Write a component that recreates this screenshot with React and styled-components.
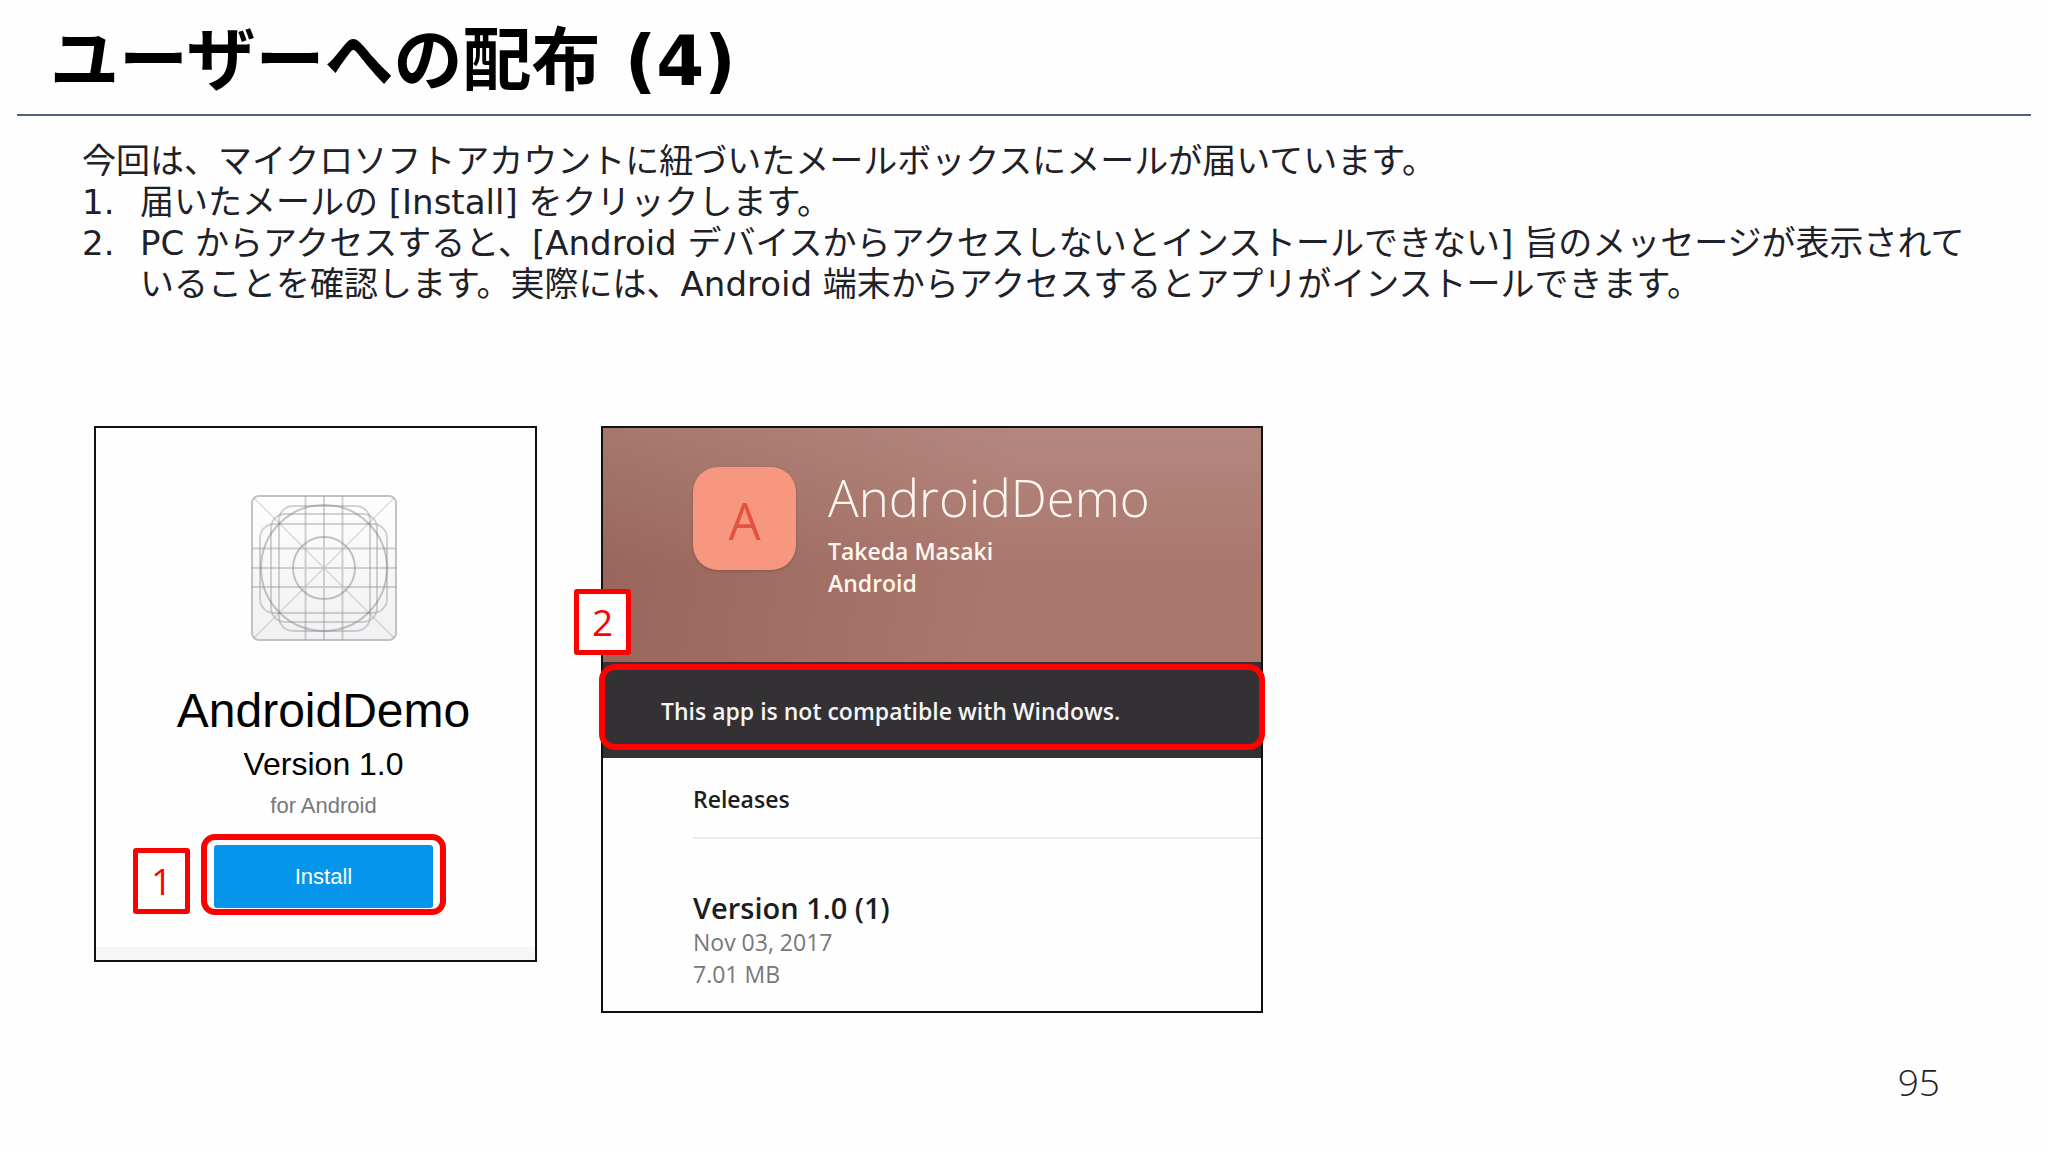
import React from "react";
import styled, { createGlobalStyle } from "styled-components";

export default function App() {
    return (
        <>
            <GlobalStyle />
            <Slide lang="ja">
                <Header>
                    <Title>ユーザーへの配布 (4)</Title>
                </Header>
                <Intro>
                    <p>今回は、マイクロソフトアカウントに紐づいたメールボックスにメールが届いています。</p>
                    <Steps>
                        <li>届いたメールの [Install] をクリックします。</li>
                        <li>
                            PC からアクセスすると、[Android デバイスからアクセスしないとインストールできない] 旨のメッセージが表示されていることを確認します。実際には、Android 端末からアクセスするとアプリがインストールできます。
                        </li>
                    </Steps>
                </Intro>
                <Figures>
                    <InstallCard />
                    <ReleaseCard />
                </Figures>
                <PageNumber>95</PageNumber>
            </Slide>
        </>
    );
}

function InstallCard() {
    return (
        <MailCard>
            <GridIcon />
            <MailTitle>AndroidDemo</MailTitle>
            <MailVersion>Version 1.0</MailVersion>
            <MailPlatform>for Android</MailPlatform>
            <ButtonFrame>
                <InstallButton type="button">Install</InstallButton>
                <Marker $top={8} $left={-74}>1</Marker>
            </ButtonFrame>
        </MailCard>
    );
}

function ReleaseCard() {
    return (
        <AppCard>
            <Banner>
                <AppIcon>A</AppIcon>
                <div>
                    <AppName>AndroidDemo</AppName>
                    <AppMeta>Takeda Masaki</AppMeta>
                    <AppMeta>Android</AppMeta>
                </div>
            </Banner>
            <Notice>
                This app is not compatible with Windows.
                <NoticeFrame />
                <Marker $top={-73} $left={-29}>2</Marker>
            </Notice>
            <Releases>
                <ReleasesTitle>Releases</ReleasesTitle>
                <ReleaseVersion>Version 1.0 (1)</ReleaseVersion>
                <ReleaseMeta>Nov 03, 2017</ReleaseMeta>
                <ReleaseMeta>7.01 MB</ReleaseMeta>
            </Releases>
        </AppCard>
    );
}

function GridIcon() {
    return (
        <IconSvg viewBox="0 0 146 146" aria-hidden="true">
            <defs>
                <linearGradient id="iconFill" x1="0" y1="0" x2="0" y2="1">
                    <stop offset="0" stopColor="#fefefe" />
                    <stop offset="1" stopColor="#f1f1f3" />
                </linearGradient>
            </defs>
            <rect x="1" y="1" width="144" height="144" rx="7" fill="url(#iconFill)" stroke="#c2c2c3" strokeWidth="2" />
            <g fill="none" stroke="#8c8c8e" strokeOpacity="0.28" strokeWidth="1.5">
                <path d="M3 3L143 143M143 3L3 143" />
            </g>
            <g fill="none" stroke="#8c8c8e" strokeOpacity="0.38" strokeWidth="2">
                <path d="M54.5 1V145M73 1V145M91.5 1V145M1 53.5H145M1 73H145M1 92H145" />
                <rect x="9" y="29" width="127" height="89" rx="14" />
                <rect x="28" y="11" width="91" height="125" rx="14" />
                <rect x="20" y="19" width="106" height="108" rx="14" />
            </g>
            <g fill="none" stroke="#7e7e80" strokeOpacity="0.45" strokeWidth="2">
                <circle cx="73" cy="73" r="63" />
                <circle cx="73" cy="73" r="31" />
            </g>
        </IconSvg>
    );
}

const GlobalStyle = createGlobalStyle`
    * {
        box-sizing: border-box;
    }

    body {
        margin: 0;
        background-color: #FEFEFE;
    }

    h1, h2, h3, p, ol {
        margin: 0;
        padding: 0;
        font-weight: 400;
    }
`;

const Slide = styled.main`
    min-height: 100vh;
    display: flex;
    flex-direction: column;
    color: #1F2128;
    font-family: "DejaVu Sans", "Noto Sans CJK JP", sans-serif;
`;

const Header = styled.header`
    margin: 0 17px;
    padding: 17px 33px 8px;
    border-bottom: 2px solid #4A6583;
`;

const Title = styled.h1`
    font-size: 69px;
    font-weight: 700;
    line-height: 89px;
    color: black;
`;

const Intro = styled.section`
    padding: 25px 50px 0 82px;
    font-size: 34px;
    line-height: 41px;
`;

const Steps = styled.ol`
    list-style: none;
    counter-reset: step;

    li {
        counter-increment: step;
        display: flex;
    }

    li::before {
        content: counter(step) ".";
        flex: 0 0 58px;
    }
`;

const Figures = styled.div`
    display: flex;
    align-items: flex-start;
    gap: 64px;
    padding: 121px 94px 0;
`;

const MailCard = styled.article`
    width: 443px;
    display: flex;
    flex-direction: column;
    align-items: center;
    padding: 67px 0 45px 16px;
    border: 2px solid #111111;
    background: linear-gradient(#F6F6F9, #F6F6F9) bottom / 100% 13px no-repeat;
    font-family: "Liberation Sans", Arial, sans-serif;
    color: black;
`;

const IconSvg = styled.svg`
    width: 146px;
    height: 146px;
`;

const MailTitle = styled.h2`
    margin-top: 40px;
    font-size: 48px;
    line-height: 60px;
`;

const MailVersion = styled.p`
    font-size: 32px;
    line-height: 46px;
`;

const MailPlatform = styled.p`
    font-size: 22px;
    line-height: 38px;
    color: #77787A;
`;

const ButtonFrame = styled.div`
    position: relative;
    margin-top: 9px;
    padding: 5px 7px 1px;
    border: 6px solid #FF0000;
    border-radius: 14px;
`;

const InstallButton = styled.button`
    display: block;
    width: 219px;
    height: 63px;
    padding: 0;
    border: none;
    border-radius: 3px;
    background-color: #0596EC;
    color: white;
    font-family: inherit;
    font-size: 22px;
`;

const Marker = styled.span`
    position: absolute;
    top: ${({ $top }) => $top}px;
    left: ${({ $left }) => $left}px;
    width: 57px;
    height: 66px;
    display: flex;
    align-items: center;
    justify-content: center;
    border: 5px solid #FF0000;
    border-radius: 3px;
    background-color: white;
    color: #FF0000;
    font-family: "Open Sans", sans-serif;
    font-size: 37px;
    font-weight: 400;
    line-height: 48px;
`;

const AppCard = styled.article`
    width: 662px;
    border: 2px solid #111111;
    font-family: "Open Sans", sans-serif;
`;

const Banner = styled.div`
    display: flex;
    gap: 32px;
    padding: 39px 24px 63px 90px;
    background:
        linear-gradient(to bottom, rgba(255, 255, 255, 0.12), rgba(255, 255, 255, 0) 60%),
        linear-gradient(100deg, #99655A, #AA776D 60%);
    color: #FFF6EF;
`;

const AppIcon = styled.div`
    width: 103px;
    height: 103px;
    display: flex;
    align-items: center;
    justify-content: center;
    padding-top: 3px;
    border-radius: 25px;
    background-color: #F79780;
    box-shadow: 0 1px 3px rgba(0, 0, 0, 0.2);
    color: #E3533F;
    font-size: 51px;
`;

const AppName = styled.h2`
    font-size: 51px;
    font-weight: 300;
    line-height: 60px;
    padding-bottom: 8px;
`;

const AppMeta = styled.p`
    font-size: 23px;
    font-weight: 600;
    line-height: 32px;
`;

const Notice = styled.div`
    position: relative;
    padding: 33px 58px 31px;
    background-color: #333133;
    color: #F5F5F5;
    font-size: 23px;
    font-weight: 600;
    line-height: 32px;
`;

const NoticeFrame = styled.div`
    position: absolute;
    inset: 2px -4px 8px -4px;
    border: 6px solid #FF0000;
    border-radius: 16px;
`;

const Releases = styled.section`
    padding: 24px 0 21px 90px;
    color: #1D1D1F;
`;

const ReleasesTitle = styled.h3`
    padding-bottom: 21px;
    border-bottom: 2px solid #ECECEC;
    font-size: 23px;
    font-weight: 600;
    line-height: 34px;
`;

const ReleaseVersion = styled.h3`
    margin-top: 50px;
    font-size: 29px;
    font-weight: 600;
    line-height: 37px;
`;

const ReleaseMeta = styled.p`
    color: #77787A;
    font-size: 23px;
    line-height: 32px;
`;

const PageNumber = styled.footer`
    margin-top: auto;
    padding: 0 108px 44px;
    text-align: right;
    font-family: "Open Sans", sans-serif;
    font-size: 37px;
    font-weight: 300;
    line-height: 52px;
`;
